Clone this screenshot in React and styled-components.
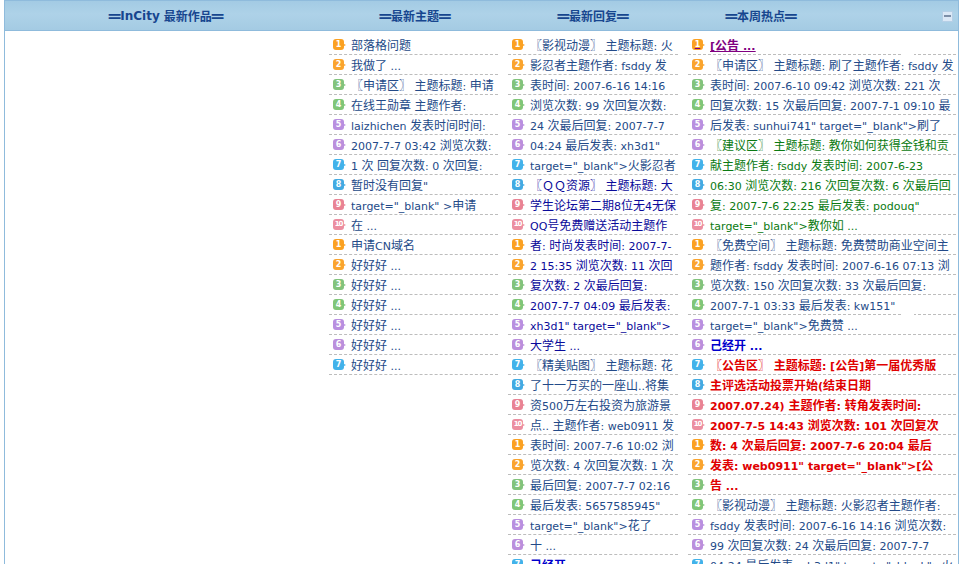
import React from "react";
import styled, { createGlobalStyle } from "styled-components";

const Global = createGlobalStyle`
  html, body { margin: 0; padding: 0; background: #fff; height: 564px; overflow: hidden; }
  body { font-family: "Noto Sans CJK SC", sans-serif; font-size: 12px; }
`;

const Frame = styled.div`
  margin-left: 4px;
  width: 955px;
  height: 564px;
  box-sizing: border-box;
  border-left: 1px solid #8fbbdc;
  border-right: 1px solid #8fbbdc;
  overflow: hidden;
`;

const Header = styled.div`
  display: grid;
  grid-template-columns: 322px 176px 180px 156px 1fr 22px;
  align-items: center;
  height: 31px;
  box-sizing: border-box;
  background: linear-gradient(#a3cbe4 0%, #aed2e8 45%, #a4cbe3 100%);
  border-top: 1px solid #8fbbdc;
  border-bottom: 1px solid #8fbbdc;
`;

const HeadCell = styled.div`
  display: flex;
  align-items: center;
  justify-content: center;
  font-weight: 700;
  font-size: 12px;
  color: #17468f;
  white-space: nowrap;
`;

const Rule = styled.span`
  font: 700 19px/12px "DejaVu Sans", sans-serif;
`;

const HeadLatin = styled.span`
  font: 700 12px "DejaVu Sans", sans-serif;
  margin-right: 4px;
`;

const Collapse = styled.button`
  width: 11px;
  height: 11px;
  padding: 0;
  justify-self: start;
  margin: 1px 0 0 6px;
  display: flex;
  align-items: center;
  justify-content: center;
  background: #dbe8f6;
  border: 1px solid #b5cfe6;
  &::before {
    content: "";
    width: 7px;
    height: 2px;
    background: #7d8fa8;
  }
`;

const Body = styled.div`
  display: grid;
  grid-template-columns: 314px 169px 170px 268px;
  column-gap: 10px;
  padding-top: 4px;
`;

const Spacer = styled.div``;

const List = styled.ul`
  list-style: none;
  margin: 0;
  padding: 0;
  min-width: 0;
`;

const Row = styled.li`
  position: relative;
  display: flex;
  align-items: center;
  height: 20px;
  box-sizing: border-box;
  border-bottom: 1px dashed #bdbdbd;
  white-space: nowrap;
  color: ${p => p.$color || "#234a88"};
  font-weight: ${p => (p.$bold ? 700 : 400)};
  text-decoration: ${p => (p.$under ? "underline" : "none")};
  &::after {
    content: "";
    display: ${p => (p.$gap ? "block" : "none")};
    position: absolute;
    right: 42px;
    bottom: -1px;
    width: 11px;
    height: 1px;
    background: #fff;
  }
`;

const palette = {
  1: "#fba122", 2: "#faa42e", 3: "#82c37c", 4: "#80c678", 5: "#b98fe0",
  6: "#bb8fdc", 7: "#42b2ea", 8: "#42aae2", 9: "#e98394", 0: "#ec8ea0",
};

const Badge = styled.span`
  position: relative;
  flex: none;
  width: 11px;
  height: 11px;
  margin: -1px 7px 0 4px;
  border-radius: 3px;
  background: ${p => palette[p.$n % 10]};
  color: #fff;
  font: 700 ${p => (p.$n === 10 ? "7px" : "8px")}/11px "DejaVu Sans", sans-serif;
  text-align: center;
  letter-spacing: ${p => (p.$n === 10 ? "-1px" : "0")};
  display: inline-block;
  &::after {
    content: "";
    position: absolute;
    left: 11px;
    top: 5px;
    border-left: 2px solid ${p => palette[p.$n % 10]};
    border-top: 1px solid transparent;
    border-bottom: 1px solid transparent;
  }
`;

const Label = styled.span`
  text-decoration: inherit;
`;

const Latin = styled.span`
  font-family: "DejaVu Sans", sans-serif;
  font-size: 11px;
`;

const navy = "#0a0a9a";
const green = "#0a7a12";
const red = "#e00000";
const blue = "#0000cc";
const purple = "#800080";

const str = a => a.map(t => (typeof t === "string" ? { t } : t));

const col2 = str([
  "部落格问题", "我做了 ...", "〖申请区〗 主题标题: 申请", "在线王勋章 主题作者:",
  "laizhichen 发表时间时间:", "2007-7-7 03:42 浏览次数:", "1 次 回复次数: 0 次回复:",
  "暂时没有回复\"", "target=\"_blank\" >申请", "在 ...", "申请CN域名",
  "好好好 ...", "好好好 ...", "好好好 ...", "好好好 ...", "好好好 ...", "好好好 ...",
]);

const n = t => ({ t, c: navy });
const col3 = str([
  "〖影视动漫〗 主题标题: 火", "影忍者主题作者: fsddy 发", "表时间: 2007-6-16 14:16",
  "浏览次数: 99 次回复次数:", "24 次最后回复: 2007-7-7", "04:24 最后发表: xh3d1\"",
  "target=\"_blank\">火影忍者",
  n("〖ＱＱ资源〗 主题标题: 大"), n("学生论坛第二期8位无4无保"), n("QQ号免费赠送活动主题作"),
  n("者: 时尚发表时间: 2007-7-"), n("2 15:35 浏览次数: 11 次回"), n("复次数: 2 次最后回复:"),
  n("2007-7-7 04:09 最后发表:"), n("xh3d1\" target=\"_blank\">"), n("大学生 ..."),
  "〖精美贴图〗 主题标题: 花", "了十一万买的一座山..将集", "资500万左右投资为旅游景",
  "点.. 主题作者: web0911 发", "表时间: 2007-7-6 10:02 浏", "览次数: 4 次回复次数: 1 次",
  "最后回复: 2007-7-7 02:16", "最后发表: 5657585945\"", "target=\"_blank\">花了", "十 ...",
  { t: "己经开 ...", c: blue, b: true },
]);

const g = t => ({ t, c: green });
const r = t => ({ t, c: red, b: true });
const col4 = str([
  { t: "[公告 ...", c: purple, b: true, u: true, gap: true },
  "〖申请区〗 主题标题: 刷了主题作者: fsddy 发", "表时间: 2007-6-10 09:42 浏览次数: 221 次",
  "回复次数: 15 次最后回复: 2007-7-1 09:10 最", "后发表: sunhui741\" target=\"_blank\">刷了",
  g("〖建议区〗 主题标题: 教你如何获得金钱和贡"), g("献主题作者: fsddy 发表时间: 2007-6-23"),
  g("06:30 浏览次数: 216 次回复次数: 6 次最后回"), g("复: 2007-7-6 22:25 最后发表: podouq\""),
  g("target=\"_blank\">教你如 ..."),
  "〖免费空间〗 主题标题: 免费赞助商业空间主", "题作者: fsddy 发表时间: 2007-6-16 07:13 浏",
  "览次数: 150 次回复次数: 33 次最后回复:", { t: "2007-7-1 03:33 最后发表: kw151\"", gap: true },
  "target=\"_blank\">免费赞 ...", { t: "己经开 ...", c: blue, b: true },
  r("〖公告区〗 主题标题: [公告]第一届优秀版"), r("主评选活动投票开始(结束日期"),
  r("2007.07.24) 主题作者: 转角发表时间:"), r("2007-7-5 14:43 浏览次数: 101 次回复次"),
  r("数: 4 次最后回复: 2007-7-6 20:04 最后"), r("发表: web0911\" target=\"_blank\">[公"), r("告 ..."),
  "〖影视动漫〗 主题标题: 火影忍者主题作者:", "fsddy 发表时间: 2007-6-16 14:16 浏览次数:",
  "99 次回复次数: 24 次最后回复: 2007-7-7", "04:24 最后发表: xh3d1\" target=\"_blank\">火",
]);

const Mixed = ({ text }) =>
  text.split(/([\x00-\x7f]+)/).map((part, i) =>
    i % 2 ? <Latin key={i}>{part}</Latin> : part
  );

const Column = ({ items }) => (
  <List>
    {items.map((it, i) => (
      <Row key={i} $color={it.c} $bold={it.b} $under={it.u} $gap={it.gap}>
        <Badge $n={(i % 10) + 1}>{(i % 10) + 1}</Badge>
        <Label><Mixed text={it.t} /></Label>
      </Row>
    ))}
  </List>
);

const Title = ({ children, latin }) => (
  <HeadCell>
    <Rule>═</Rule>
    {latin && <HeadLatin>{latin}</HeadLatin>}
    {children}
    <Rule>═</Rule>
  </HeadCell>
);

export default function App() {
  return (
    <>
      <Global />
      <Frame>
        <Header>
          <Title latin="InCity">最新作品</Title>
          <Title>最新主题</Title>
          <Title>最新回复</Title>
          <Title>本周热点</Title>
          <span />
          <Collapse aria-label="收起" />
        </Header>
        <Body>
          <Spacer />
          <Column items={col2} />
          <Column items={col3} />
          <Column items={col4} />
        </Body>
      </Frame>
    </>
  );
}
